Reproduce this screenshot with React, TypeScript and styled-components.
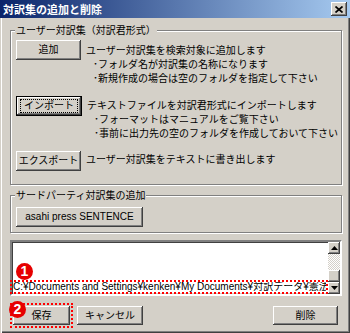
import React from 'react';
import styled, { createGlobalStyle } from 'styled-components';

const Global = createGlobalStyle`
  html, body { margin: 0; padding: 0; background: #d4d0c8; }
  body {
    font-family: "Liberation Sans", "Noto Sans CJK JP", sans-serif;
    font-size: 10px;
    color: #000;
  }
  * { box-sizing: border-box; }
`;

const Window = styled.div`
  width: 350px;
  height: 333px;
  background: #d4d0c8;
  display: flex;
  flex-direction: column;
  overflow: hidden;
`;

const TitleBar = styled.div`
  height: 18px;
  flex: none;
  display: flex;
  align-items: center;
  padding: 0 3px 0 3px;
  background: linear-gradient(to right, #0a246a, #a6caf0);
`;

const Title = styled.div`
  flex: 1;
  color: #fff;
  font-family: "Noto Sans CJK JP", sans-serif;
  font-weight: bold;
  font-size: 11px;
  line-height: 14px;
`;

const CloseBtn = styled.div`
  width: 16px;
  height: 14px;
  background: #d4d0c8;
  box-shadow: inset -1px -1px #404040, inset 1px 1px #fff, inset -2px -2px #808080, inset 2px 2px #d4d0c8;
  display: flex;
  align-items: center;
  justify-content: center;
`;

const Body = styled.div`
  flex: 1;
  display: flex;
  flex-direction: column;
  padding: 0 8px 0 10px;
  box-shadow: inset 1px 0 #d4d0c8, inset 2px 0 #fff, inset -1px -1px #404040, inset -2px -2px #808080;
`;

const Group = styled.div<{ $mt: number; $pt: number; $pb: number }>`
  position: relative;
  margin-top: ${p => p.$mt}px;
  padding: ${p => p.$pt}px 5px ${p => p.$pb}px 5px;
  border: 1px solid #808080;
  box-shadow: inset 1px 1px #fff, 1px 1px #fff;
  display: flex;
  flex-direction: column;
  gap: 10px;
`;

const Legend = styled.div`
  position: absolute;
  top: -7px;
  left: 4px;
  padding: 0 1px;
  background: #d4d0c8;
  font-family: "Noto Sans CJK JP", sans-serif;
  line-height: 12px;
  white-space: nowrap;
`;

const Row = styled.div`
  display: flex;
  align-items: flex-start;
`;

const Btn = styled.button<{ $w: number; $h?: number; $def?: boolean }>`
  position: relative;
  flex: none;
  width: ${p => p.$w}px;
  height: ${p => p.$h ?? 20}px;
  padding: 0;
  margin: 0;
  background: #d4d0c8;
  border: ${p => (p.$def ? '1px solid #000' : 'none')};
  box-shadow: inset -1px -1px #404040, inset 1px 1px #fff, inset -2px -2px #808080, inset 2px 2px #d4d0c8;
  font: inherit;
  color: #000;
  line-height: 12px;
  display: flex;
  align-items: center;
  justify-content: center;
  white-space: nowrap;
`;

const FocusRect = styled.span`
  position: absolute;
  top: 2px;
  bottom: 2px;
  left: 3px;
  right: 3px;
  border: 1px dotted #000;
  pointer-events: none;
`;

const Desc = styled.div<{ $mt: number }>`
  margin-left: 5px;
  margin-top: ${p => p.$mt}px;
  display: flex;
  flex-direction: column;
`;

const Line = styled.div<{ $indent?: boolean }>`
  line-height: 14px;
  white-space: nowrap;
  padding-left: ${p => (p.$indent ? 7 : 0)}px;
`;

const ListBox = styled.div`
  position: relative;
  margin-top: 7px;
  height: 56px;
  flex: none;
  background: #fff;
  border-style: solid;
  border-width: 2px;
  border-color: #808080 #fff #fff #808080;
  box-shadow: inset 1px 1px #404040, inset -1px -1px #d4d0c8;
  display: flex;
`;

const ListItems = styled.div`
  flex: 1;
  display: flex;
  flex-direction: column;
  justify-content: flex-end;
  min-width: 0;
`;

const PathRow = styled.div`
  margin-left: -2px;
  height: 14px;
  border: 2px dotted #ff0000;
  display: flex;
  align-items: center;
  padding-left: 1px;
  line-height: 10px;
  white-space: nowrap;
  overflow: hidden;
`;

const ScrollBar = styled.div`
  width: 12px;
  flex: none;
  display: flex;
  flex-direction: column;
`;

const ScrollBtn = styled.div`
  height: 12px;
  flex: none;
  background: #d4d0c8;
  box-shadow: inset -1px -1px #404040, inset 1px 1px #fff, inset -2px -2px #808080, inset 2px 2px #d4d0c8;
  display: flex;
  align-items: center;
  justify-content: center;
`;

const Track = styled.div`
  flex: 1;
  background: repeating-conic-gradient(#fff 0 25%, #d4d0c8 0 50%) 0 0 / 2px 2px;
  display: flex;
  flex-direction: column;
  justify-content: flex-end;
`;

const Badge = styled.div<{ $left: number; $top: number }>`
  position: absolute;
  left: ${p => p.$left}px;
  top: ${p => p.$top}px;
  width: 17px;
  height: 17px;
  border-radius: 50%;
  background: #e60000;
  color: #fff;
  font-family: "Liberation Sans", sans-serif;
  font-weight: bold;
  font-size: 14px;
  line-height: 17px;
  text-align: center;
  z-index: 2;
`;

const Footer = styled.div`
  margin-top: 7px;
  display: flex;
  align-items: center;
  padding-right: 4px;
`;

const SaveWrap = styled.div`
  position: relative;
  border: 2px dotted #ff0000;
  padding: 1px;
  display: flex;
`;

const Spacer = styled.div`
  flex: 1;
`;

const Gap = styled.div<{ $w: number }>`
  width: ${p => p.$w}px;
  flex: none;
`;

const Arrow = ({ up }: { up?: boolean }) => (
  <svg width="7" height="4" viewBox="0 0 7 4">
    <polygon points={up ? '3.5,0 7,4 0,4' : '0,0 7,0 3.5,4'} fill="#000" />
  </svg>
);

export default function App() {
  return (
    <>
      <Global />
      <Window>
        <TitleBar>
          <Title>対訳集の追加と削除</Title>
          <CloseBtn>
            <svg width="8" height="7" viewBox="0 0 8 7">
              <path d="M0.5 0.5 L7.5 6.5 M7.5 0.5 L0.5 6.5" stroke="#000" strokeWidth="1.7" />
            </svg>
          </CloseBtn>
        </TitleBar>
        <Body>
          <Group $mt={12} $pt={9} $pb={13}>
            <Legend>ユーザー対訳集（対訳君形式）</Legend>
            <Row>
              <Btn $w={65}>追加</Btn>
              <Desc $mt={4}>
                <Line>ユーザー対訳集を検索対象に追加します</Line>
                <Line $indent>･フォルダ名が対訳集の名称になります</Line>
                <Line $indent>･新規作成の場合は空のフォルダを指定して下さい</Line>
              </Desc>
            </Row>
            <Row>
              <Btn $w={66} $def>
                インポート
                <FocusRect />
              </Btn>
              <Desc $mt={3}>
                <Line>テキストファイルを対訳君形式にインポートします</Line>
                <Line $indent>･フォーマットはマニュアルをご覧下さい</Line>
                <Line $indent>･事前に出力先の空のフォルダを作成しておいて下さい</Line>
              </Desc>
            </Row>
            <Row>
              <Btn $w={65}>エクスポート</Btn>
              <Desc $mt={2}>
                <Line>ユーザー対訳集をテキストに書き出します</Line>
              </Desc>
            </Row>
          </Group>
          <Group $mt={10} $pt={11} $pb={5}>
            <Legend>サードパーティ対訳集の追加</Legend>
            <Row>
              <Btn $w={127}>asahi press SENTENCE</Btn>
            </Row>
          </Group>
          <ListBox>
            <Badge $left={4} $top={21}>1</Badge>
            <ListItems>
              <PathRow>C:¥Documents and Settings¥kenken¥My Documents¥対訳データ¥憲法</PathRow>
            </ListItems>
            <ScrollBar>
              <ScrollBtn>
                <Arrow up />
              </ScrollBtn>
              <Track>
                <ScrollBtn />
              </Track>
              <ScrollBtn>
                <Arrow />
              </ScrollBtn>
            </ScrollBar>
          </ListBox>
          <Footer>
            <SaveWrap>
              <Badge $left={-3} $top={-4}>2</Badge>
              <Btn $w={57} $h={19}>保存</Btn>
            </SaveWrap>
            <Gap $w={4} />
            <Btn $w={66} $h={19}>キャンセル</Btn>
            <Spacer />
            <Btn $w={65} $h={19}>削除</Btn>
          </Footer>
        </Body>
      </Window>
    </>
  );
}
